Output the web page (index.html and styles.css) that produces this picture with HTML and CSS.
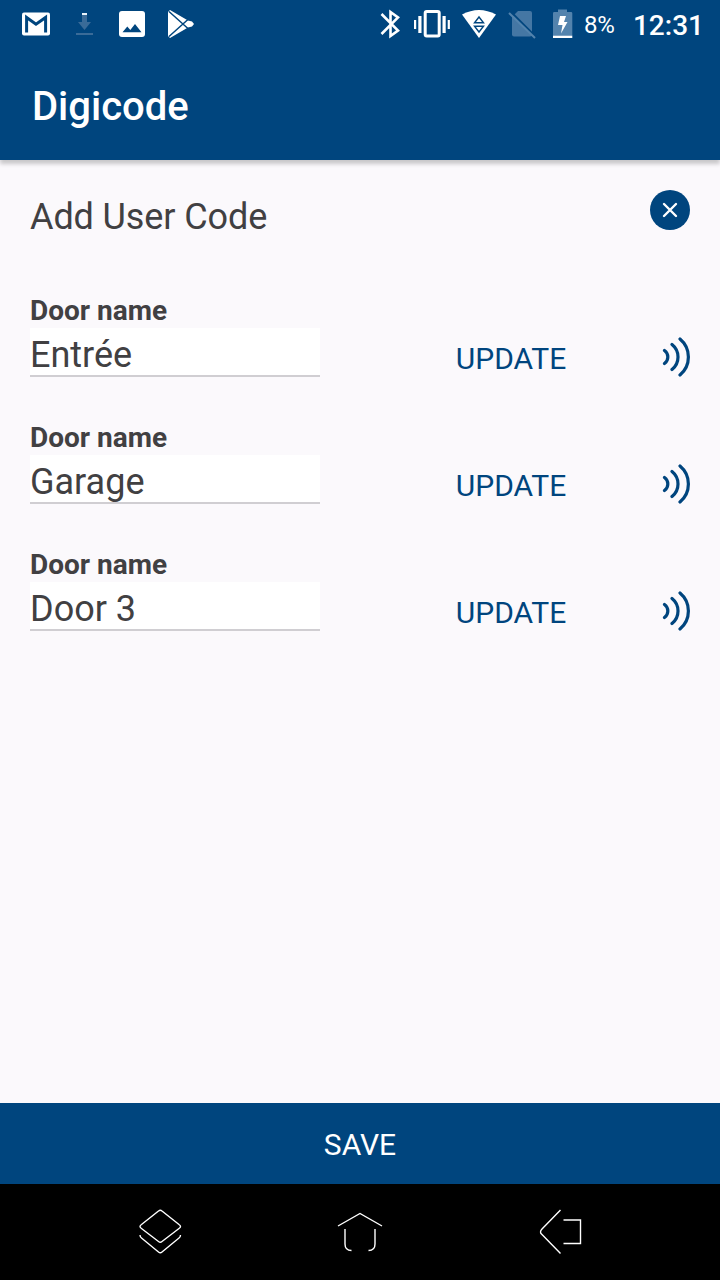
FILE: index.html
```html
<!DOCTYPE html>
<html lang="en">
  <head>
    <meta charset="UTF-8" />
    <meta name="viewport" content="width=device-width, initial-scale=1.0" />
    <title>Digicode</title>
    <link rel="stylesheet" href="styles.css">
  </head>
  <body>
    <!-- status bar -->
    <div class="status-bar">
      <div class="notifications">
        <svg width="32" height="48" viewBox="0 0 32 48">
          <rect x="2" y="12.5" width="28" height="23" rx="2" fill="#fff" />
          <path d="M6.6 32.5V17.5L16 24.2L25.6 17.5V32.5" fill="none" stroke="#00457e" stroke-width="3" />
        </svg>
        <svg width="32" height="48" viewBox="0 0 32 48">
          <path d="M14 15h5v7h4l-6.500 8l-6.500-8h4zM8 33h17v2H8z" fill="#3a6b98" />
          <path d="M14 13h5v2h-5z" fill="#e8f3fb" />
        </svg>
        <svg width="32" height="48" viewBox="0 0 32 48">
          <rect x="3" y="11" width="26" height="26" rx="3" fill="#fff" />
          <path d="M6.500 32.300L11.300 26.500L14.300 30L19 24L25.500 32.300z" fill="#00457e" />
        </svg>
        <svg width="32" height="48" viewBox="0 0 32 48">
          <path d="M4 12L6 10L24 20.500L28 21.500L30 24L28 26.500L24 27.500L6 38L4 36z" fill="#fff" />
          <path d="M5 11.500L24.500 29M5 36.500L24.500 19" stroke="#00457e" stroke-width="1.500" />
        </svg>
      </div>
      <div class="system-icons">
        <svg width="32" height="48" viewBox="0 0 32 48">
          <path d="M7.500 14L24 30.500L16.500 36V12L24 17.500L7.500 34" fill="none" stroke="#fff" stroke-width="2.600" />
        </svg>
        <svg width="38" height="48" viewBox="0 0 38 48">
          <rect x="11.200" y="11.500" width="14" height="24.500" rx="1.500" fill="none" stroke="#fff" stroke-width="3" />
          <path d="M4.300 16h3.200v17H4.300zM0 20h2.200v9H0zM28.500 16h3.200v17h-3.200zM33.700 20h2.200v9h-2.200z" fill="#fff" />
        </svg>
        <svg width="38" height="48" viewBox="0 0 38 48">
          <path d="M2 14.500Q19 5.500 36 14.500L19 38z" fill="#fff" />
          <path d="M19 17L14.500 22.800h9zM19 32L14.500 26.200h9z" fill="none" stroke="#00457e" stroke-width="1.400" />
        </svg>
        <svg width="34" height="48" viewBox="0 0 34 48">
          <path d="M12 11H24Q26 11 26 13V34.500Q26 36.500 24 36.500H8Q6 36.500 6 34.500V17z" fill="#4577a4" />
          <path d="M4.500 11.500L30.500 37.500" stroke="#00457e" stroke-width="2" />
          <path d="M3 13L29 38" stroke="#5383ad" stroke-width="2" />
        </svg>
        <svg width="28" height="48" viewBox="0 0 28 48">
          <path d="M10 9.500h9v2.500h4q1.300 0 1.300 1.300V36H5V13.300q0-1.300 1.300-1.300H10z" fill="#5383ad" />
          <path d="M5 35.800h19.300V38H5zM12 16h6l-2 6h3.500L13 33.500l1.500-8.500H10z" fill="#fff" />
        </svg>
        <span class="battery-level">8%</span>
        <span class="clock">12:31</span>
      </div>
    </div>

    <header>
      <h1>Digicode</h1>
    </header>

    <main class="container">
      <div class="title-row">
        <h2>Add User Code</h2>
        <button class="close-button" aria-label="Close">
          <svg width="40" height="40" viewBox="0 0 40 40">
            <path d="M14 14L26 26M26 14L14 26" stroke="#fff" stroke-width="2.400" stroke-linecap="round" />
          </svg>
        </button>
      </div>

      <!-- doors -->
      <div class="door">
        <label for="door-1">Door name</label>
        <div class="door-row">
          <input type="text" id="door-1" value="Entrée" />
          <button class="update-button">UPDATE</button>
          <svg class="signal" width="30" height="40" viewBox="0 0 30 40">
            <path d="M4.500 13.500A8 8 0 0 1 4.500 26.500M12 7.500A16 16 0 0 1 12 32.500M20 2A23.500 23.500 0 0 1 20 38" />
          </svg>
        </div>
      </div>
      <div class="door">
        <label for="door-2">Door name</label>
        <div class="door-row">
          <input type="text" id="door-2" value="Garage" />
          <button class="update-button">UPDATE</button>
          <svg class="signal" width="30" height="40" viewBox="0 0 30 40">
            <path d="M4.500 13.500A8 8 0 0 1 4.500 26.500M12 7.500A16 16 0 0 1 12 32.500M20 2A23.500 23.500 0 0 1 20 38" />
          </svg>
        </div>
      </div>
      <div class="door">
        <label for="door-3">Door name</label>
        <div class="door-row">
          <input type="text" id="door-3" value="Door 3" />
          <button class="update-button">UPDATE</button>
          <svg class="signal" width="30" height="40" viewBox="0 0 30 40">
            <path d="M4.500 13.500A8 8 0 0 1 4.500 26.500M12 7.500A16 16 0 0 1 12 32.500M20 2A23.500 23.500 0 0 1 20 38" />
          </svg>
        </div>
      </div>
    </main>

    <button class="save-button">SAVE</button>

    <!-- navigation bar -->
    <nav class="nav-bar">
      <svg width="48" height="48" viewBox="0 0 48 48">
        <path d="M22.500 3Q24.300 1.500 26 3L43 16.500Q46 18.500 43 20.500L26 33.500Q24.300 35 22.500 33.500L5.500 20.500Q2.500 18.500 5.500 16.500zM4 27Q4 29 5.500 30L22.500 44Q24.300 45.500 26 44L43 30Q44.500 29 44.500 27" />
      </svg>
      <svg width="48" height="48" viewBox="0 0 48 48">
        <path d="M2 18L24 5.500L46 18M9 21V36Q9 42.500 15.500 42.500M39 21V36Q39 42.500 32.500 42.500" />
      </svg>
      <svg width="48" height="48" viewBox="0 0 48 48">
        <path d="M24.500 2L6 21Q3 24 6 26.500L24.500 45.500M27.500 12H44.500V35.500H27.500" />
      </svg>
    </nav>
  </body>
</html>
```

FILE: styles.css
```css
* {
  box-sizing: border-box;
}
body {
  font-family: Roboto, sans-serif;
  margin: 0;
  height: 1280px;
  display: flex;
  flex-direction: column;
  background-color: #fbf9fc;
  color: #414042;
}
svg {
  display: block;
  flex-shrink: 0;
}
button {
  font-family: inherit;
  border: none;
  padding: 0;
  cursor: pointer;
}
.status-bar {
  display: flex;
  justify-content: space-between;
  height: 48px;
  padding: 0 16px 0 20px;
  background-color: #00457e;
  color: #fff;
}
.notifications {
  display: flex;
  gap: 16px;
}
.system-icons {
  display: flex;
  align-items: center;
  gap: 8px;
}
.battery-level {
  font-size: 24px;
  line-height: 48px;
  padding-top: 2px;
}
.clock {
  font-size: 28px;
  font-weight: 500;
  line-height: 46px;
  padding-top: 4px;
  margin-left: 10px;
}
header {
  height: 112px;
  padding: 0 32px;
  display: flex;
  align-items: center;
  background-color: #00457e;
  color: #fff;
  box-shadow: 0 4px 4px rgba(0, 0, 0, 0.2);
}
h1 {
  font-size: 40px;
  font-weight: 500;
  margin: 5px 0 0;
}
.container {
  flex: 1;
  padding: 30px 30px 0;
}
.title-row {
  display: flex;
  justify-content: space-between;
  height: 104px;
}
.title-row h2 {
  font-size: 36px;
  font-weight: 400;
  letter-spacing: -0.1px;
  line-height: 42px;
  margin: 6px 0 0;
}
.close-button {
  width: 40px;
  height: 40px;
  border-radius: 50%;
  background-color: #00457e;
}
.door {
  height: 127px;
}
.door label {
  display: block;
  height: 34px;
  font-size: 28px;
  font-weight: 700;
  line-height: 33px;
}
.door-row {
  display: flex;
  align-items: center;
  height: 49px;
}
.door input {
  width: 290px;
  height: 49px;
  padding: 7px 0 0;
  border: none;
  border-bottom: 2px solid #d0ced2;
  background-color: #fff;
  color: inherit;
  font-family: inherit;
  font-size: 36px;
}
.update-button {
  width: 200px;
  margin: 12px 0 0 91px;
  background: none;
  color: #00457e;
  font-size: 30px;
}
.signal {
  margin: 8px 0 0 auto;
  fill: none;
  stroke: #00457e;
  stroke-width: 3.2;
  stroke-linecap: round;
}
.save-button {
  height: 81px;
  padding-top: 2px;
  background-color: #00457e;
  color: #fff;
  font-size: 30px;
}
.nav-bar {
  display: flex;
  justify-content: space-between;
  align-items: center;
  height: 96px;
  padding: 0 136px;
  background-color: #000;
}
.nav-bar svg {
  fill: none;
  stroke: #fff;
  stroke-width: 1.4;
}
```
